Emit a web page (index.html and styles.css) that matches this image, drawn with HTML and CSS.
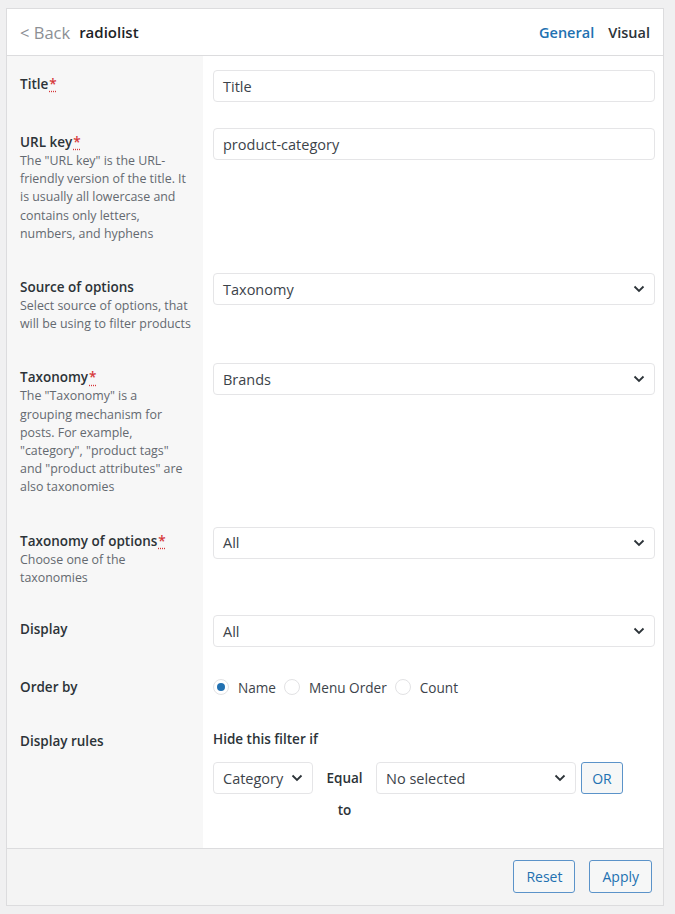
FILE: index.html
```html
<!DOCTYPE html>
<html lang="en">
<head>
<meta charset="utf-8">
<title>radiolist</title>
<link rel="stylesheet" href="styles.css">
</head>
<body>
<div class="panel">
  <header class="head">
    <div class="head-left">
      <span class="back">&lt; Back</span>
      <span class="name">radiolist</span>
    </div>
    <nav class="tabs">
      <span class="tab active">General</span>
      <span class="tab">Visual</span>
    </nav>
  </header>

  <div class="form">
    <div class="row">
      <div class="label"><div class="ttl">Title<abbr class="req" title="required">*</abbr></div></div>
      <div class="field"><div class="input">Title</div></div>
    </div>

    <div class="row">
      <div class="label">
        <div class="ttl">URL key<abbr class="req" title="required">*</abbr></div>
        <div class="desc">The "URL key" is the URL-<br>friendly version of the title. It<br>is usually all lowercase and<br>contains only letters,<br>numbers, and hyphens</div>
      </div>
      <div class="field"><div class="input">product-category</div></div>
    </div>

    <div class="row">
      <div class="label">
        <div class="ttl">Source of options</div>
        <div class="desc">Select source of options, that<br>will be using to filter products</div>
      </div>
      <div class="field"><div class="input select"><span>Taxonomy</span><svg class="chev" viewBox="0 0 12 8" width="12" height="8"><path d="M1.5 1.5 6 6 10.5 1.5" fill="none" stroke="#2c3338" stroke-width="1.8"/></svg></div></div>
    </div>

    <div class="row">
      <div class="label">
        <div class="ttl">Taxonomy<abbr class="req" title="required">*</abbr></div>
        <div class="desc">The "Taxonomy" is a<br>grouping mechanism for<br>posts. For example,<br>"category", "product tags"<br>and "product attributes" are<br>also taxonomies</div>
      </div>
      <div class="field"><div class="input select"><span>Brands</span><svg class="chev" viewBox="0 0 12 8" width="12" height="8"><path d="M1.5 1.5 6 6 10.5 1.5" fill="none" stroke="#2c3338" stroke-width="1.8"/></svg></div></div>
    </div>

    <div class="row">
      <div class="label label-tight">
        <div class="ttl">Taxonomy of options<abbr class="req" title="required">*</abbr></div>
        <div class="desc">Choose one of the<br>taxonomies</div>
      </div>
      <div class="field"><div class="input select"><span>All</span><svg class="chev" viewBox="0 0 12 8" width="12" height="8"><path d="M1.5 1.5 6 6 10.5 1.5" fill="none" stroke="#2c3338" stroke-width="1.8"/></svg></div></div>
    </div>

    <div class="row row-display">
      <div class="label"><div class="ttl">Display</div></div>
      <div class="field"><div class="input select"><span>All</span><svg class="chev" viewBox="0 0 12 8" width="12" height="8"><path d="M1.5 1.5 6 6 10.5 1.5" fill="none" stroke="#2c3338" stroke-width="1.8"/></svg></div></div>
    </div>

    <div class="row row-order">
      <div class="label"><div class="ttl">Order by</div></div>
      <div class="field">
        <div class="radios">
          <span class="radio checked"></span><span class="rlabel">Name</span>
          <span class="radio"></span><span class="rlabel">Menu Order</span>
          <span class="radio"></span><span class="rlabel">Count</span>
        </div>
      </div>
    </div>

    <div class="row row-rules">
      <div class="label"><div class="ttl">Display rules</div></div>
      <div class="field">
        <div class="rules-title">Hide this filter if</div>
        <div class="rule">
          <div class="input select sel-cat"><span>Category</span><svg class="chev" viewBox="0 0 12 8" width="12" height="8"><path d="M1.5 1.5 6 6 10.5 1.5" fill="none" stroke="#2c3338" stroke-width="1.8"/></svg></div>
          <div class="eq">Equal to</div>
          <div class="input select sel-val"><span>No selected</span><svg class="chev" viewBox="0 0 12 8" width="12" height="8"><path d="M1.5 1.5 6 6 10.5 1.5" fill="none" stroke="#2c3338" stroke-width="1.8"/></svg></div>
          <button class="btn btn-or">OR</button>
        </div>
      </div>
    </div>
  </div>

  <footer class="foot">
    <button class="btn">Reset</button>
    <button class="btn">Apply</button>
  </footer>
</div>
</body>
</html>
```

FILE: styles.css
```css
* { box-sizing: border-box; }

body {
  margin: 0;
  padding: 8px 11px 10px 6px;
  background: #f0f0f1;
  font-family: "Open Sans", "Noto Sans", sans-serif;
  color: #2c3338;
}

.panel {
  width: 658px;
  border: 1px solid #dcdcde;
  background: #fff;
}

.head {
  height: 47px;
  border-bottom: 1px solid #dcdcde;
  display: flex;
  align-items: center;
  justify-content: space-between;
  padding: 0 13px 0 13px;
}

.head-left { display: flex; align-items: center; gap: 9px; }

.back { color: #8c8f94; font-size: 16.5px; }
.name { color: #1d2327; font-size: 15px; font-weight: 600; }

.tabs { display: flex; gap: 14px; }
.tab { font-size: 14.5px; font-weight: 600; color: #2c3338; }
.tab.active { color: #2271b1; }

.row {
  display: grid;
  grid-template-columns: 196px 1fr;
}

.label {
  background: #f7f7f7;
  padding: 18px 4px 16px 13px;
}

.label-tight { padding-bottom: 14px; }

.ttl {
  font-size: 13.5px;
  font-weight: 600;
  line-height: 20px;
  color: #2c3338;
}

.req {
  color: #d63638;
  text-decoration: underline dotted;
  text-underline-offset: 2px;
  margin-left: 1px;
}

.desc {
  font-size: 12.4px;
  line-height: 18.2px;
  color: #646970;
  white-space: nowrap;
}

.field {
  padding: 14px 8px 12px 10px;
}

.input {
  height: 32px;
  border: 1px solid #e5e5e7;
  border-radius: 4px;
  background: #fff;
  padding: 0 9px;
  font-size: 14.5px;
  color: #3c434a;
  display: flex;
  align-items: center;
}

.select { justify-content: space-between; }
.chev { flex: none; }

.row-order .field { padding-top: 12px; padding-bottom: 9px; }

.radios {
  height: 32px;
  display: flex;
  align-items: center;
  font-size: 13.6px;
  color: #3c434a;
}

.radio {
  width: 16px;
  height: 16px;
  border-radius: 50%;
  border: 1px solid #e2e2e4;
  background: #fff;
  display: inline-flex;
  align-items: center;
  justify-content: center;
  margin-right: 9px;
}
.radio.checked::after {
  content: "";
  width: 8px;
  height: 8px;
  border-radius: 50%;
  background: #2271b1;
}
.rlabel { margin-right: 8px; }

.row-rules .label { padding-bottom: 0; }
.row-rules .field { padding-top: 16px; padding-bottom: 22px; }

.rules-title {
  font-size: 13.5px;
  font-weight: 600;
  line-height: 20px;
  color: #2c3338;
}

.rule {
  display: flex;
  align-items: flex-start;
  margin-top: 13px;
}

.sel-cat { width: 100px; }
.sel-val { width: 200px; }

.eq {
  width: 63px;
  text-align: center;
  font-size: 13.5px;
  font-weight: 600;
  line-height: 32px;
  color: #2c3338;
  padding: 0 8px;
}

.btn {
  font-family: inherit;
  height: 33px;
  border: 1px solid #5b93c9;
  border-radius: 3px;
  background: #f6f7f7;
  color: #2271b1;
  font-size: 14px;
  padding: 0 12px;
}

.btn-or { margin-left: 5px; height: 32px; width: 42px; padding: 0; }

.foot {
  border-top: 1px solid #dcdcde;
  background: #f4f4f4;
  display: flex;
  justify-content: flex-end;
  gap: 14px;
  padding: 11px 11px 12px;
}
```
